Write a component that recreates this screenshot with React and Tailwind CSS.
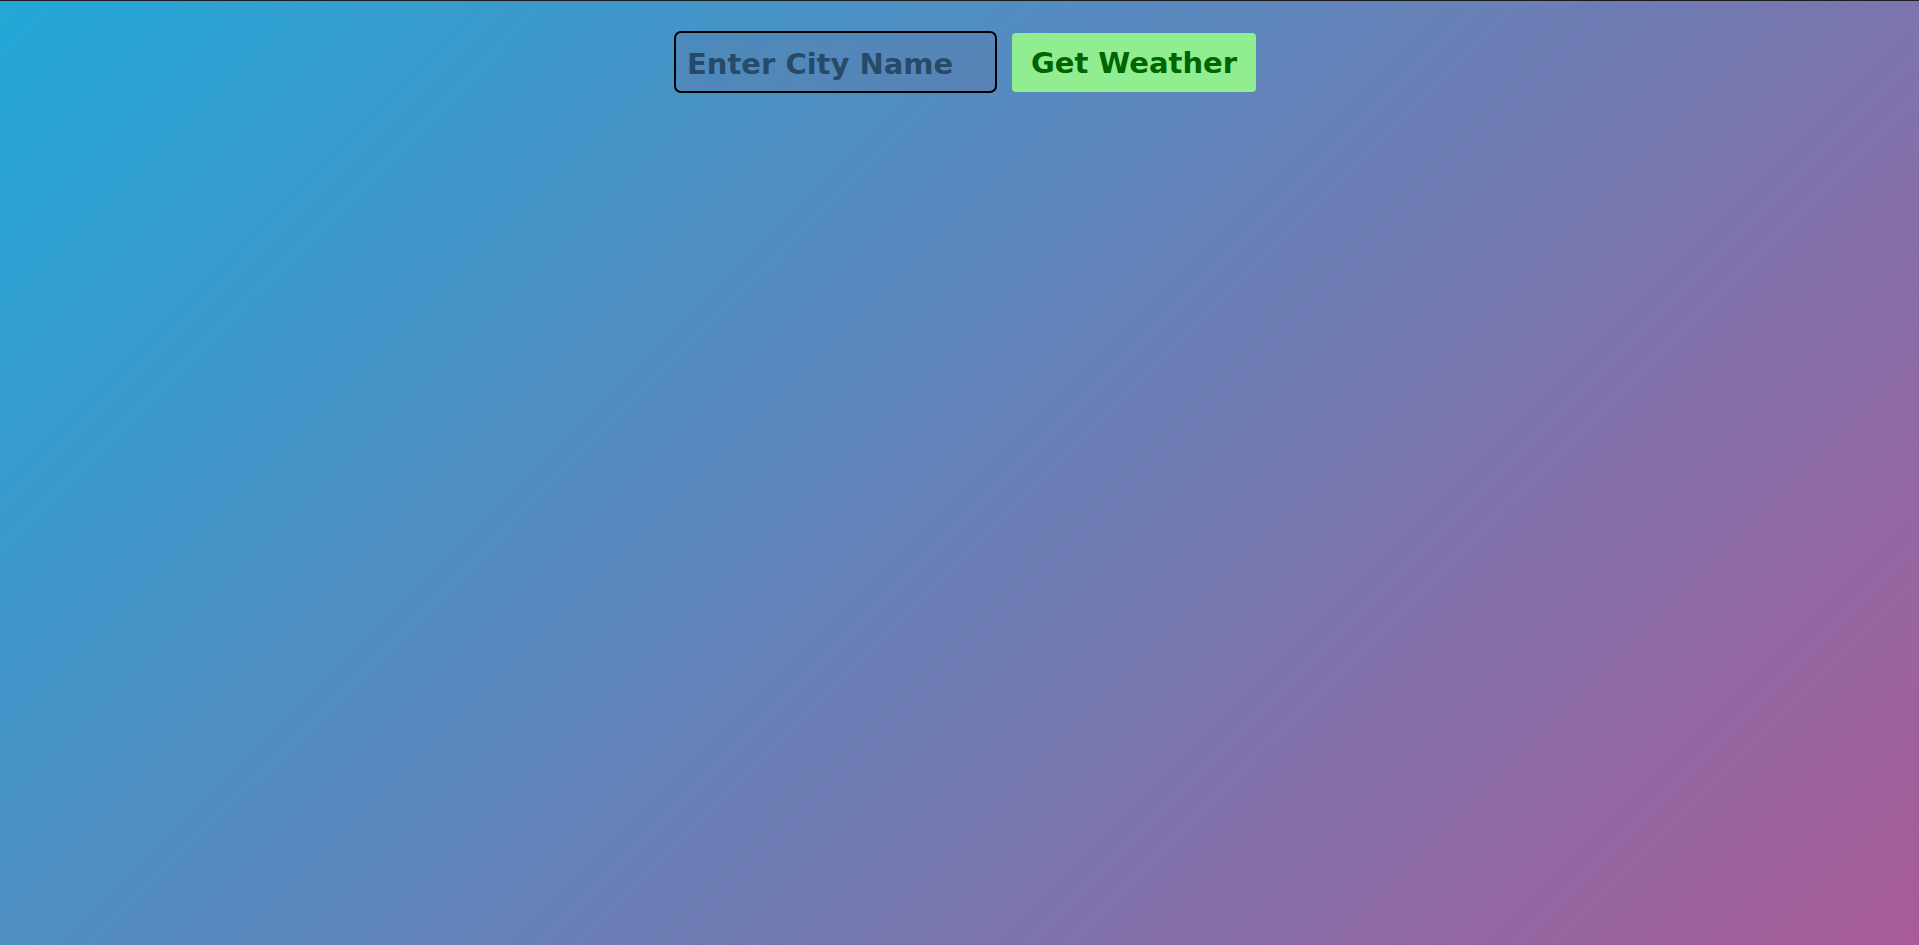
import React, { useState } from 'react';

function App() {
  const [city, setCity] = useState('');

  const handleSubmit = (e) => {
    e.preventDefault();
  };

  return (
    <div
      className="min-h-screen w-full border-t border-[#1c1c1c] bg-[linear-gradient(135deg,#22a8d8,#a85b98)]"
      style={{ fontFamily: '"DejaVu Sans", Tahoma, sans-serif' }}
    >
      <form onSubmit={handleSubmit} className="flex justify-center items-center gap-[15px] pt-[30px] pl-[11px]">
        <input
          type="text"
          value={city}
          onChange={(e) => setCity(e.target.value)}
          placeholder="Enter City Name"
          className="w-[323px] h-[62px] px-[11px] pt-[4px] rounded-[7px] border-2 border-black bg-[rgba(110,100,140,0.2)] text-[29px] font-bold text-[#264a68] placeholder:text-[#264a68] outline-none"
        />
        <button
          type="submit"
          className="w-[244px] h-[59px] pt-[4px] rounded-[4px] bg-[#90ee90] text-[29px] font-bold text-[#006400]"
        >
          Get Weather
        </button>
      </form>
    </div>
  );
}

export default App;
